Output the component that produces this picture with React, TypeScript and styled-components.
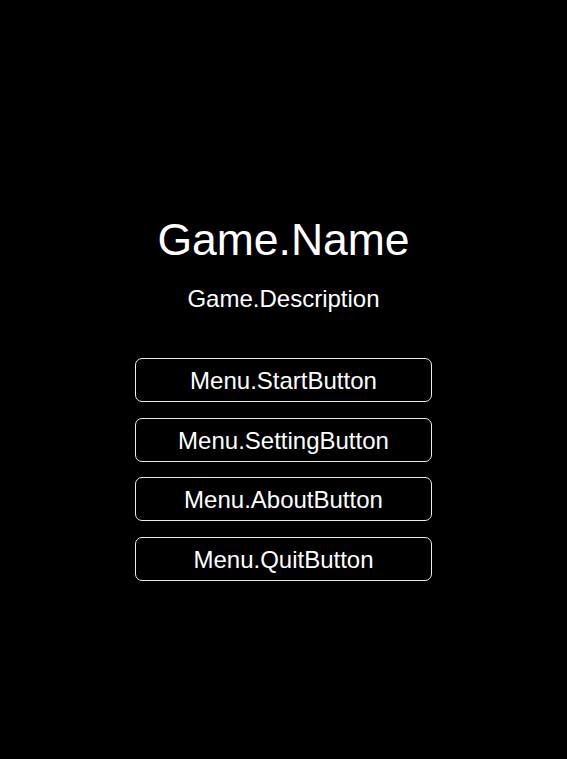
import React from "react";
import styled, { createGlobalStyle } from "styled-components";

const Global = createGlobalStyle`
  html, body { margin: 0; padding: 0; background: #000; }
  body { font-family: "Liberation Sans", Arial, sans-serif; color: #fff; }
`;

const Screen = styled.main`
  min-height: 100vh;
  display: flex;
  flex-direction: column;
  align-items: center;
  justify-content: center;
  background: #000;
  padding-top: 37px;
  box-sizing: border-box;
`;

const Title = styled.h1`
  margin: 0;
  font-size: 44.5px;
  font-weight: 400;
  line-height: 50px;
`;

const Description = styled.p`
  margin: 21px 0 0;
  font-size: 24px;
  line-height: 26px;
`;

const Menu = styled.nav`
  margin-top: 46px;
  display: flex;
  flex-direction: column;
  gap: 15.7px;
`;

const MenuButton = styled.button`
  width: 297px;
  height: 44px;
  box-sizing: border-box;
  background: #000;
  color: #fff;
  border: 1.5px solid #ececec;
  border-radius: 7px;
  font-family: "Liberation Sans", Arial, sans-serif;
  font-size: 24px;
  padding: 2px 0 0;
  cursor: pointer;
`;

const items = ["Menu.StartButton", "Menu.SettingButton", "Menu.AboutButton", "Menu.QuitButton"];

export default function App() {
  return (
    <>
      <Global />
      <Screen>
        <Title>Game.Name</Title>
        <Description>Game.Description</Description>
        <Menu>
          {items.map((t) => (
            <MenuButton key={t}>{t}</MenuButton>
          ))}
        </Menu>
      </Screen>
    </>
  );
}
